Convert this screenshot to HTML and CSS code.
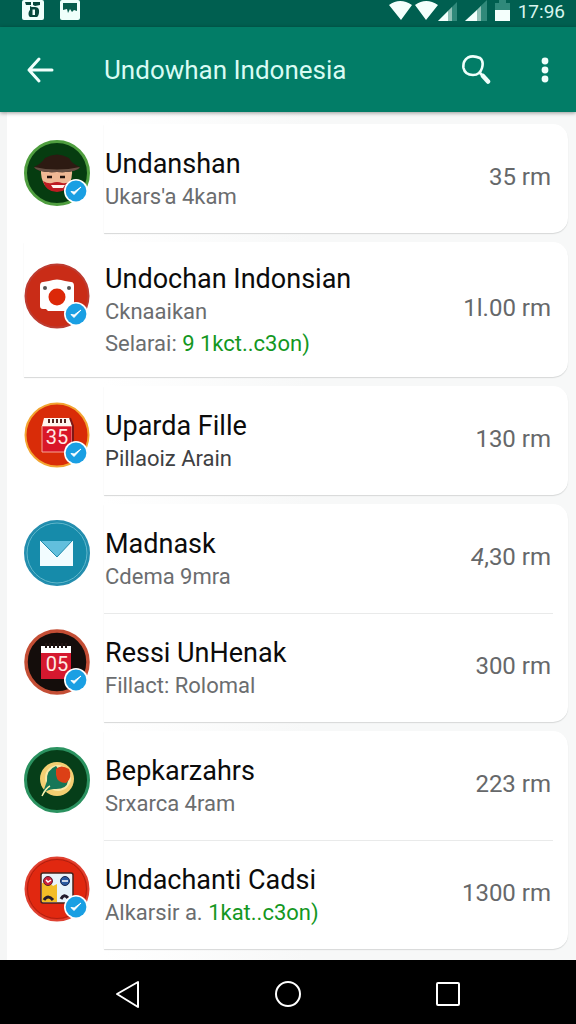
FILE: index.html
```html
<!DOCTYPE html>
<html lang="id">
<head>
  <meta charset="UTF-8" />
  <meta name="viewport" content="width=device-width, initial-scale=1.0" />
  <title>Undowhan Indonesia</title>
  <link rel="stylesheet" href="styles.css">
</head>
<body>
  <svg class="sprite" aria-hidden="true">
    <symbol id="check" viewBox="0 0 24 24">
      <circle cx="12" cy="12" r="12" fill="#fff"/>
      <circle cx="12" cy="12" r="10.4" fill="#1a9fe3"/>
      <path d="M7 12.5l3 3 7-7.5-6.8 5z" fill="#fff" stroke="#fff" stroke-width="1" stroke-linejoin="round"/>
    </symbol>
  </svg>

  <div class="status-bar">
    <div class="status-left">
      <svg width="22" height="20" viewBox="0 0 22 20">
        <rect width="22" height="20" rx="2" fill="#effffb"/>
        <path d="M3 2h6v3H4zM11 2h7v3l-5 1-2-1z" fill="#06483c"/>
        <path d="M8 6c2 2 6 0 8 2s1 8-1 9H8c-2-1-2-5 0-7z" fill="#06483c"/>
        <path d="M10.500 9.500h2.500v5.500h-2.500z" fill="#effffb"/>
      </svg>
      <svg width="20" height="20" viewBox="0 0 20 20">
        <rect width="20" height="20" rx="2" fill="#effffb"/>
        <path d="M3 3h14v8l-3-1-2 2-2-3-2 4-1-4-4 1z" fill="#075c4d"/>
      </svg>
    </div>
    <div class="status-right">
      <svg width="106" height="22" viewBox="0 0 106 22">
        <path d="M0 5Q11-3 23 5L12 20zM26 5Q37-3 49 5L37 20z" fill="#f4fffc"/>
        <path d="M49 21L68 2v19z" fill="#30897a"/>
        <path d="M49 21L59 11v10z" fill="#f4fffc"/>
        <path d="M59 11l4-4v14h-4z" fill="#91c1b6"/>
        <path d="M76 21L98 0v21z" fill="#30897a"/>
        <path d="M76 21L88 10v11z" fill="#f4fffc"/>
        <path d="M88 10l4-4v15h-4z" fill="#91c1b6"/>
      </svg>
      <svg width="15" height="22" viewBox="0 0 15 22">
        <path d="M4 0h7v3h4v7H0V3h4z" fill="#30897a"/>
        <path d="M0 10h15v11H0z" fill="#f4fffc"/>
      </svg>
      <span class="clock">17:96</span>
    </div>
  </div>

  <header class="app-bar">
    <button class="icon-btn" aria-label="Kembali">
      <svg width="28" height="28" viewBox="0 0 28 28" fill="none" stroke="#effffb" stroke-width="3" stroke-linecap="round" stroke-linejoin="round">
        <path d="M13 3L3 14l10 11M3 14h23"/>
      </svg>
    </button>
    <h1>Undowhan Indonesia</h1>
    <button class="icon-btn" aria-label="Cari">
      <svg width="30" height="30" viewBox="0 0 30 30" fill="none" stroke="#effffb" stroke-linecap="round">
        <path d="M7 2.500Q12 0 19 3q4 3 2 10-2 7-9 7-8 0-9.500-7-1-7 4.500-10.500z" stroke-width="2.600"/>
        <path d="M19 18l2.500 2.500" stroke-width="2.600"/>
        <path d="M22 21l5 5.500" stroke-width="4.500"/>
      </svg>
    </button>
    <button class="icon-btn" aria-label="Menu lainnya">
      <svg width="8" height="28" viewBox="0 0 8 28" fill="#effffb">
        <circle cx="4" cy="5" r="3.400"/>
        <circle cx="4" cy="14" r="3.400"/>
        <circle cx="4" cy="23" r="3.400"/>
      </svg>
    </button>
  </header>

  <main class="list">
    <section class="card">
      <div class="row">
        <div class="avatar">
          <svg viewBox="0 0 66 66">
            <circle cx="33" cy="33" r="31.500" fill="#063c10" stroke="#4f9e3f" stroke-width="3"/>
            <path d="M17 28h31c1 15-5 23-15 23S16 43 17 28z" fill="#efb995"/>
            <path d="M19 41q5 3 9 2 5-2 10 0 5 1 8-2-2 11-13 11-11 0-14-11z" fill="#bd1c22"/>
            <path d="M27 45h14l-2 3H29z" fill="#fff3ed"/>
            <path d="M23 37h5M36 37h5" fill="none" stroke="#22140e" stroke-width="2.500"/>
            <path d="M10 27Q17 24 21 18q12-7 24 0 3 6 11 9-3 6-23 5-20 1-23-5z" fill="#2d1a12"/>
            <path d="M10 27q23 5 46 0-3 6-23 5-20 1-23-5z" fill="#665044"/>
          </svg>
          <svg class="badge" viewBox="0 0 24 24"><use href="#check"/></svg>
        </div>
        <div class="info">
          <h2>Undanshan</h2>
          <p>Ukars'a 4kam</p>
        </div>
        <span class="value">35 rm</span>
      </div>
    </section>

    <section class="card card-wide">
      <div class="row row-tall">
        <div class="avatar">
          <svg viewBox="0 0 66 66">
            <circle cx="33" cy="33" r="31.500" fill="#c92c17" stroke="#bd3c31" stroke-width="2"/>
            <path d="M19 19l6-1q8-3 16 0l6 1q3 0 3 4v22q0 3-3 3H24l-2-2h-3q-3 0-3-3V23q0-4 3-4z" fill="#fff"/>
            <circle cx="33" cy="34" r="8.500" fill="#dc2808"/>
            <circle cx="21" cy="25" r="2" fill="#555"/>
            <circle cx="45" cy="25" r="2" fill="#555"/>
          </svg>
          <svg class="badge" viewBox="0 0 24 24"><use href="#check"/></svg>
        </div>
        <div class="info">
          <h2>Undochan Indonsian</h2>
          <p>Cknaaikan</p>
          <p>Selarai: <a href="#">9 1kct..c3on)</a></p>
        </div>
        <span class="value">1l.00 rm</span>
      </div>
    </section>

    <section class="card">
      <div class="row">
        <div class="avatar">
          <svg viewBox="0 0 66 66">
            <circle cx="33" cy="33" r="31.500" fill="#d92c08" stroke="#f3a431" stroke-width="2"/>
            <path d="M18 24h30v26H18z" fill="#d91628" stroke="#f7a597"/>
            <path d="M20 16h26l2 8H18z" fill="#fff5ee"/>
            <path d="M25 17v4M29 17v4M33 17v4M37 17v4M41 17v4" stroke="#562520" stroke-width="2"/>
            <path d="M46 16l3 8v18" fill="none" stroke="#7d1816" stroke-width="2"/>
            <text x="33" y="42" class="cal-day">35</text>
          </svg>
          <svg class="badge" viewBox="0 0 24 24"><use href="#check"/></svg>
        </div>
        <div class="info">
          <h2>Uparda Fille</h2>
          <p class="dark">Pillaoiz Arain</p>
        </div>
        <span class="value">130 rm</span>
      </div>
    </section>

    <section class="card">
      <div class="row">
        <div class="avatar">
          <svg viewBox="0 0 66 66">
            <circle cx="33" cy="33" r="32" fill="#168baa" stroke="#258eaf" stroke-width="2"/>
            <circle cx="33" cy="33" r="30" fill="none" stroke="#65b8cc"/>
            <path d="M16 21h33v25H16z" fill="#f2fcff"/>
            <path d="M17 21h31L33 37z" fill="#62bfdd"/>
            <path d="M17 21l16 16 15-16" fill="none" stroke="#218bab"/>
          </svg>
        </div>
        <div class="info">
          <h2>Madnask</h2>
          <p>Cdema 9mra</p>
        </div>
        <span class="value"><i>4</i>,30 rm</span>
      </div>
      <div class="row">
        <div class="avatar">
          <svg viewBox="0 0 66 66">
            <circle cx="33" cy="33" r="31" fill="#140d0b" stroke="#c44e35" stroke-width="3.500"/>
            <path d="M17 17h30v33H17z" fill="#d5182f"/>
            <path d="M17 17h30v7H17z" fill="#fff"/>
            <path d="M22 14v5M26 14v5M30 14v5M34 14v5M38 14v5M42 14v5" stroke="#211513" stroke-width="2"/>
            <text x="33" y="42" class="cal-day">05</text>
          </svg>
          <svg class="badge" viewBox="0 0 24 24"><use href="#check"/></svg>
        </div>
        <div class="info">
          <h2>Ressi UnHenak</h2>
          <p>Fillact: Rolomal</p>
        </div>
        <span class="value">300 rm</span>
      </div>
    </section>

    <section class="card">
      <div class="row">
        <div class="avatar">
          <svg viewBox="0 0 66 66">
            <circle cx="33" cy="33" r="31.500" fill="#063e19" stroke="#2b9260" stroke-width="3"/>
            <circle cx="33" cy="32" r="17" fill="#f4cf72"/>
            <circle cx="34" cy="31" r="13" fill="#fae9a7"/>
            <path d="M32 19q-10 4-9 15l-5 14q6-7 14-6 11 0 12-8z" fill="#167657"/>
            <path d="M32 22q5-5 13 0 4 9-3 14-9 0-10-8z" fill="#dc4016"/>
            <path d="M18 49q4-8 8-10" fill="none" stroke="#fff1aa" stroke-width="1.500"/>
          </svg>
        </div>
        <div class="info">
          <h2>Bepkarzahrs</h2>
          <p>Srxarca 4ram</p>
        </div>
        <span class="value">223 rm</span>
      </div>
      <div class="row">
        <div class="avatar">
          <svg viewBox="0 0 66 66">
            <circle cx="33" cy="33" r="31.500" fill="#e12810" stroke="#df4232" stroke-width="2"/>
            <circle cx="33" cy="33" r="29.500" fill="none" stroke="#af1f10"/>
            <rect x="17" y="17" width="32" height="30" rx="2" fill="#e8f3fa" stroke="#46231c" stroke-width="1.500"/>
            <path d="M18 27q8-1 11 3l4-2v18H18z" fill="#f3bd27"/>
            <circle cx="24" cy="25" r="4.500" fill="#cf213b" stroke="#57202f"/>
            <circle cx="41" cy="25" r="4.500" fill="#2b5aa0" stroke="#172650"/>
            <path d="M22 24l2 2 3-2M38 25h6" fill="none" stroke="#fff" stroke-width="1.500"/>
            <path d="M20 44q4-6 9 0M37 43q3-6 7-1" fill="none" stroke="#241c2d" stroke-width="3"/>
          </svg>
          <svg class="badge" viewBox="0 0 24 24"><use href="#check"/></svg>
        </div>
        <div class="info">
          <h2>Undachanti Cadsi</h2>
          <p>Alkarsir a. <a href="#">1kat..c3on)</a></p>
        </div>
        <span class="value">1300 rm</span>
      </div>
    </section>
  </main>

  <nav class="nav-bar">
    <button aria-label="Kembali">
      <svg width="28" height="28" viewBox="0 0 28 28"><path d="M3 14L24 2v25z"/></svg>
    </button>
    <button aria-label="Beranda">
      <svg width="28" height="28" viewBox="0 0 28 28"><circle cx="14" cy="14" r="12"/></svg>
    </button>
    <button aria-label="Aplikasi terbaru">
      <svg width="28" height="28" viewBox="0 0 28 28"><rect x="3" y="3" width="22" height="22" rx="1"/></svg>
    </button>
  </nav>
</body>
</html>
```
FILE: styles.css
```css
* {
  box-sizing: border-box;
}
body {
  margin: 0;
  min-height: 100vh;
  display: flex;
  flex-direction: column;
  font-family: Roboto, "Liberation Sans", sans-serif;
  background: #f5f6f6;
  color: #0b0b0b;
}
h1, h2, p {
  margin: 0;
  font-weight: 400;
}
button {
  border: none;
  padding: 0;
  background: none;
  cursor: pointer;
}
svg {
  display: block;
}
.sprite {
  display: none;
}

/* status bar */
.status-bar {
  display: flex;
  flex-shrink: 0;
  justify-content: space-between;
  height: 27px;
  padding: 0 11px 0 22px;
  background: #005f50;
}
.status-left {
  display: flex;
  gap: 16px;
}
.status-right {
  display: flex;
}
.clock {
  margin-left: 8px;
  font-size: 19px;
  line-height: 24px;
  color: #d9f5ee;
}

/* app bar */
.app-bar {
  position: relative;
  display: flex;
  flex-shrink: 0;
  align-items: center;
  height: 85px;
  padding: 0 27px 0 26px;
  background: #027d67;
  box-shadow: 0 1px 4px rgba(0, 0, 0, 0.4);
}
.app-bar h1 {
  flex: 1;
  margin-left: 50px;
  font-size: 26px;
  line-height: 32px;
  color: #d9fbf3;
}
.icon-btn + .icon-btn {
  margin-left: 50px;
}

/* list */
.list {
  flex: 1;
  display: flex;
  flex-direction: column;
  gap: 9px;
  margin-left: 7px;
  padding: 12px 8px 11px 0;
  background: linear-gradient(to right, #fff 97px, #f7f8f8 300px);
}
.card {
  position: relative;
  z-index: 0;
  border-radius: 0 15px 15px 0;
  background: #fff;
}
/* bottom edge starts under the text, not under the avatar */
.card::before {
  content: "";
  position: absolute;
  inset: 0 0 0 97px;
  z-index: -1;
  border-radius: 0 15px 15px 0;
  box-shadow: 0 1px 1px #d6d8d8;
}
.card-wide::before {
  left: 17px;
}
.row {
  display: flex;
  align-items: center;
  padding: 24px 17px 20px;
}
.row + .row {
  background: linear-gradient(#e9eaea, #e9eaea) 97px 0 / calc(100% - 112px) 1px no-repeat;
}
.row-tall {
  padding: 21px 17px 17px;
}
.avatar {
  position: relative;
  align-self: flex-start;
  width: 66px;
  height: 66px;
  margin-top: -8px;
}
.row-tall .avatar {
  margin-top: 0;
}
.badge {
  position: absolute;
  right: 2px;
  bottom: 3px;
  width: 24px;
  height: 24px;
}
.cal-day {
  font-size: 20px;
  text-anchor: middle;
  fill: #ffe9e4;
}
.info {
  flex: 1;
  margin-left: 15px;
}
.info h2 {
  font-size: 27px;
  line-height: 33px;
}
.info p {
  font-size: 22px;
  line-height: 32px;
  color: #6b6d6f;
}
.info p.dark {
  color: #3f4143;
}
.info a {
  color: #14971f;
  text-decoration: none;
}
.value {
  padding-bottom: 7px;
  font-size: 24px;
  line-height: 32px;
  color: #66686a;
}

/* navigation bar */
.nav-bar {
  display: flex;
  flex-shrink: 0;
  justify-content: center;
  align-items: center;
  gap: 132px;
  height: 64px;
  padding-top: 4px;
  background: #000;
}
.nav-bar svg {
  fill: none;
  stroke: #fff;
  stroke-width: 2;
  stroke-linejoin: round;
}
```
